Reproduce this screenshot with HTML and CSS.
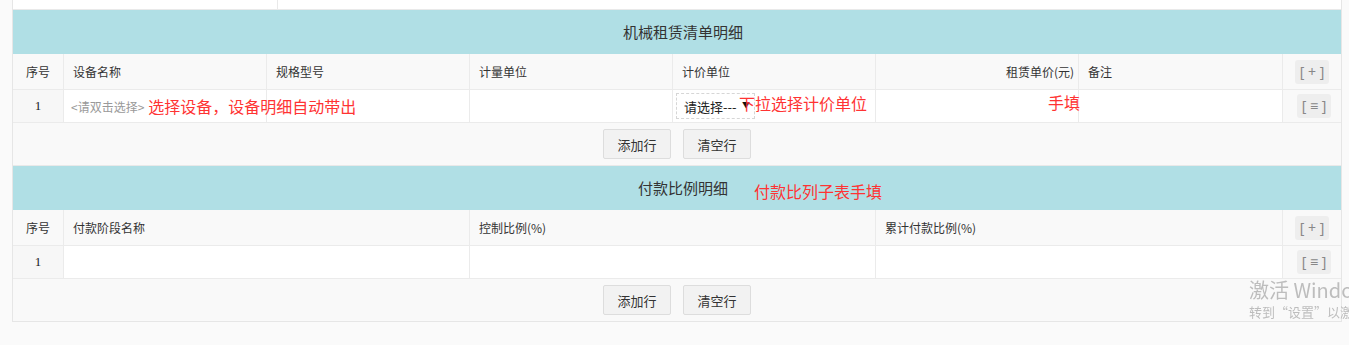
FILE: index.html
```html
<!DOCTYPE html>
<html lang="zh-CN">
<head>
  <meta charset="UTF-8" />
  <title>机械租赁</title>
  <meta name="viewport" content="width=device-width, initial-scale=1.0" />
  <link rel="stylesheet" href="styles.css">
</head>
<body>
  <div class="panel">
    <div class="top-strip">
      <div class="top-cell first"></div>
      <div class="top-cell"></div>
    </div>

    <!-- 机械租赁清单明细 -->
    <div class="sec-title">机械租赁清单明细</div>
    <table class="grid">
      <colgroup>
        <col style="width:50px">
        <col style="width:203px">
        <col style="width:203px">
        <col style="width:203px">
        <col style="width:203px">
        <col style="width:203px">
        <col style="width:204px">
        <col style="width:59px">
      </colgroup>
      <tr class="head">
        <th class="idx">序号</th>
        <th>设备名称</th>
        <th>规格型号</th>
        <th>计量单位</th>
        <th>计价单位</th>
        <th class="right">租赁单价(元)</th>
        <th>备注</th>
        <th class="ops"><span class="op-btn">[ + ]</span></th>
      </tr>
      <tr class="row">
        <td class="idx num">1</td>
        <td class="pick"><span class="hint">&lt;请双击选择&gt;</span><span class="note inline">选择设备，设备明细自动带出</span></td>
        <td></td>
        <td></td>
        <td class="holder">
          <span class="sel-wrap">
            <select class="sel">
              <option>请选择---</option>
            </select>
          </span>
          <span class="note unit-note">下拉选择计价单位</span>
        </td>
        <td class="holder"><span class="note price-note">手填</span></td>
        <td></td>
        <td class="ops"><span class="op-btn menu">[ ≡ ]</span></td>
      </tr>
    </table>
    <div class="actions">
      <button type="button">添加行</button>
      <button type="button">清空行</button>
    </div>

    <!-- 付款比例明细 -->
    <div class="sec-title">付款比例明细<span class="note title-note">付款比列子表手填</span></div>
    <table class="grid">
      <colgroup>
        <col style="width:50px">
        <col style="width:406px">
        <col style="width:406px">
        <col style="width:407px">
        <col style="width:59px">
      </colgroup>
      <tr class="head">
        <th class="idx">序号</th>
        <th>付款阶段名称</th>
        <th>控制比例(%)</th>
        <th>累计付款比例(%)</th>
        <th class="ops"><span class="op-btn">[ + ]</span></th>
      </tr>
      <tr class="row">
        <td class="idx num">1</td>
        <td></td>
        <td></td>
        <td></td>
        <td class="ops"><span class="op-btn menu">[ ≡ ]</span></td>
      </tr>
    </table>
    <div class="actions">
      <button type="button">添加行</button>
      <button type="button">清空行</button>
    </div>
  </div>

  <div class="watermark">
    <div class="wm-big">激活 Windows</div>
    <div class="wm-small">转到“设置”以激活Windows。</div>
  </div>
</body>
</html>
```

FILE: styles.css
```css
html, body {
  margin: 0;
  padding: 0;
  background-color: #fafafa;
  overflow: hidden;
}

body {
  font-family: "Noto Sans CJK SC", "Noto Sans", sans-serif;
  font-size: 12px;
  color: #333;
}

.panel {
  width: 1330px;
  margin-left: 12px;
  box-sizing: border-box;
  border-left: 1px solid #e6e6e6;
  border-right: 1px solid #e6e6e6;
  border-bottom: 1px solid #e6e6e6;
  background-color: #f9f9f9;
}

.top-strip {
  display: flex;
  height: 9px;
  border-bottom: 1px solid #e9e9e9;
}

.top-cell {
  flex: 1;
  background-color: #fff;
}

.top-cell.first {
  flex: 0 0 264px;
  border-right: 1px solid #e9e9e9;
}

.sec-title {
  position: relative;
  height: 44px;
  line-height: 44px;
  padding-left: 12px;
  text-align: center;
  font-size: 15px;
  color: #333;
  background-color: #b0dfe5;
}

.grid {
  width: 1328px;
  table-layout: fixed;
  border-collapse: separate;
  border-spacing: 0;
}

.grid th, .grid td {
  box-sizing: border-box;
  border-left: 1px solid #ebebeb;
  border-bottom: 1px solid #ebebeb;
  padding: 0 4px 0 9px;
  text-align: left;
  font-weight: normal;
  white-space: nowrap;
  vertical-align: middle;
}

.grid th:first-child, .grid td:first-child {
  border-left: none;
}

.grid .head th {
  height: 36px;
  background-color: #f9f9f9;
}

.grid .row td {
  height: 33px;
  background-color: #fff;
}

.grid .idx {
  padding: 0;
  text-align: center;
}

.grid .row .num {
  background-color: #f7f7f7;
  font-family: "Liberation Serif", serif;
  font-size: 13px;
  color: #222;
}

.grid .right {
  text-align: right;
}

.grid .ops {
  padding: 0;
  text-align: center;
}

.grid .row .ops {
  background-color: #f9f9f9;
}

.op-btn {
  display: inline-block;
  width: 34px;
  height: 24px;
  line-height: 24px;
  border-radius: 3px;
  background-color: #eee;
  color: #888;
  font-family: "Noto Sans", sans-serif;
  font-size: 14px;
  text-align: center;
}

.op-btn.menu {
  margin-left: 4px;
}

.grid .pick {
  padding-left: 7px;
}

.hint {
  color: #999;
}

.holder {
  position: relative;
}

.grid td.holder {
  padding-left: 3px;
}

.sel-wrap {
  position: relative;
  display: inline-block;
}

.sel {
  appearance: none;
  -webkit-appearance: none;
  width: 79px;
  height: 26px;
  padding: 0 0 0 7px;
  border: 1px dashed #d6d6d6;
  border-radius: 0;
  background-color: #fff;
  font-family: "Noto Sans CJK SC", sans-serif;
  font-size: 13px;
  color: #222;
  outline: none;
}

.sel-wrap::after {
  content: "▼";
  position: absolute;
  left: 66px;
  top: 6px;
  font-size: 8px;
  color: #111;
  pointer-events: none;
}

.note {
  color: #f33;
  font-size: 16px;
  line-height: 18px;
  white-space: nowrap;
}

.note.inline {
  margin-left: 4px;
  vertical-align: -1px;
}

.unit-note {
  position: absolute;
  left: 66px;
  top: 4px;
}

.price-note {
  position: absolute;
  right: -2px;
  top: 3px;
}

.title-note {
  position: absolute;
  left: 741px;
  top: 16px;
}

.actions {
  display: flex;
  justify-content: center;
  align-items: center;
  gap: 12px;
  height: 42px;
  border-bottom: 1px solid #e9e9e9;
  background-color: #f9f9f9;
}

.actions:last-child {
  border-bottom: none;
}

.actions button {
  width: 68px;
  height: 30px;
  border: 1px solid #ddd;
  border-radius: 2px;
  background-color: #f2f2f2;
  color: #333;
  font-family: "Noto Sans CJK SC", sans-serif;
  font-size: 13px;
  cursor: pointer;
}

.watermark {
  position: fixed;
  left: 1249px;
  top: 277px;
  color: #bdbdbd;
  white-space: nowrap;
  pointer-events: none;
}

.wm-big {
  font-size: 20px;
  line-height: 26px;
}

.wm-small {
  font-size: 13px;
  line-height: 18px;
}
```
